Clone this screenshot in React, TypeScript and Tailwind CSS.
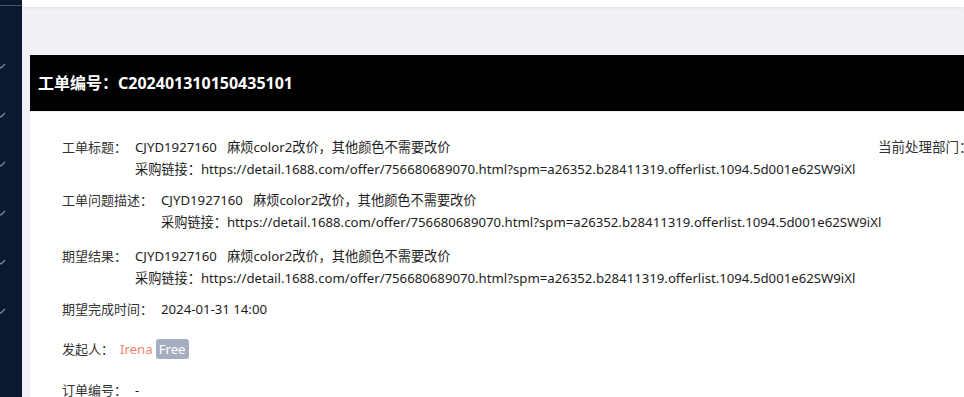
const url =
  'https://detail.1688.com/offer/756680689070.html?spm=a26352.b28411319.offerlist.1094.5d001e62SW9iXl';

const SP = '\u00a0\u00a0\u00a0';

function Chevron() {
  return (
    <svg width="8" height="8" viewBox="0 0 8 8" className="block">
      <path d="M-1 6 L1 7 L5 3" stroke="#7d8696" strokeWidth="1.4" fill="none" />
    </svg>
  );
}

function Row({ label, children, className }: { label: string; children: React.ReactNode; className?: string }) {
  return (
    <div className={`flex leading-[22px] ${className ?? ''}`}>
      <span className="shrink-0 mr-[8px] text-[#333]">{label}</span>
      <div className="text-[#1d1d1d] text-[13.2px] whitespace-nowrap">{children}</div>
    </div>
  );
}

export default function App() {
  return (
    <div
      className="flex w-[964px] h-[397px] overflow-hidden bg-[#f0f1f5]"
      style={{ fontFamily: '"Noto Sans", "Noto Sans CJK SC", sans-serif' }}
    >
      {/* 左侧菜单（折叠） */}
      <aside className="w-[22px] shrink-0 bg-[#0b192e] flex flex-col">
        <div className="h-[6px] border-b border-[#4b5566]" />
        <div className="flex flex-col gap-[41px] pt-[55px]">
          {[0, 1, 2, 3, 4, 5].map(i => (
            <Chevron key={i} />
          ))}
        </div>
      </aside>

      <main className="flex-1 min-w-0 flex flex-col">
        <header className="h-[7px] bg-white shadow-[0_1px_4px_rgba(0,0,0,0.06)] shrink-0" />
        <div className="pt-[48px] pl-[8px] flex-1 min-h-0">
          <div className="w-[1000px] h-full flex flex-col">
            <div className="h-[56px] bg-black flex items-center px-[8px] text-white text-[16px] font-bold shrink-0">
              工单编号：C202401310150435101
            </div>
            <div className="flex-1 bg-white border-t border-[#eceef2] text-[13px] flex">
              <div className="w-[848px] shrink-0 pl-[32px] pt-[24px]">
                <Row label="工单标题：" className="mb-[9px]">
                  <div>CJYD1927160{SP}麻烦color2改价，其他颜色不需要改价</div>
                  <div>采购链接：{url}</div>
                </Row>
                <Row label="工单问题描述：" className="mb-[12px]">
                  <div>CJYD1927160{SP}麻烦color2改价，其他颜色不需要改价</div>
                  <div>采购链接：{url}</div>
                </Row>
                <Row label="期望结果：" className="mb-[9px]">
                  <div>CJYD1927160{SP}麻烦color2改价，其他颜色不需要改价</div>
                  <div>采购链接：{url}</div>
                </Row>
                <Row label="期望完成时间：" className="mb-[18px]">
                  2024-01-31 14:00
                </Row>
                <Row label="发起人：" className="mb-[19px]">
                  <span className="-ml-[2px] text-[#f0866b]">Irena</span>
                  <span className="ml-[3px] inline-block rounded-[3px] bg-[#a5aec1] text-white px-[3px] leading-[20px]">
                    Free
                  </span>
                </Row>
                <Row label="订单编号：">-</Row>
              </div>
              <div className="pt-[24px] leading-[22px] text-[#333] text-[13.5px] whitespace-nowrap">当前处理部门：</div>
            </div>
          </div>
        </div>
      </main>
    </div>
  );
}
